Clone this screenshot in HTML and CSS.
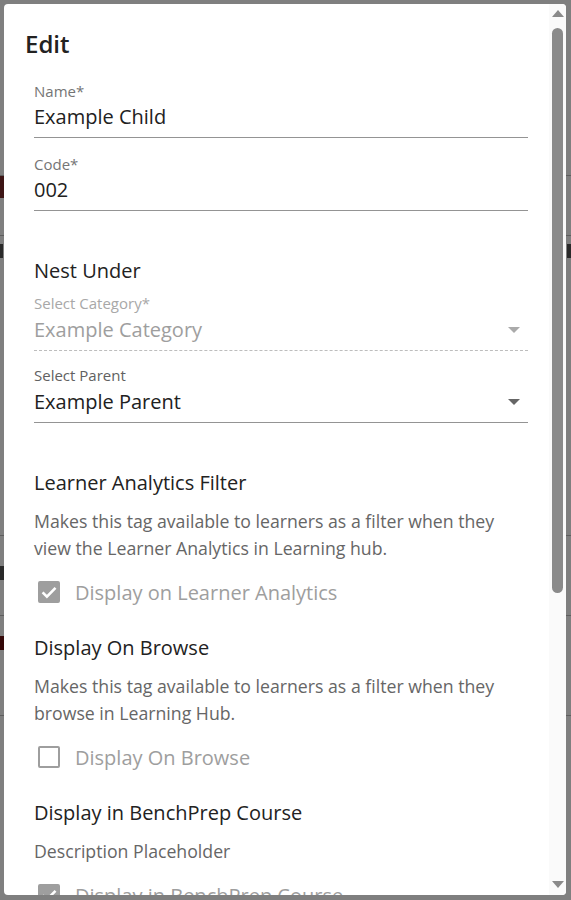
FILE: index.html
```html
<!DOCTYPE html>
<html lang="en">
<head>
<meta charset="utf-8">
<title>Edit</title>
<link rel="stylesheet" href="styles.css">
</head>
<body>
<div class="page">
  <div class="page-row row-a"></div>
  <div class="page-row row-b"><span class="red-tag"></span></div>
  <div class="page-row row-c"><span class="bg-mark"></span><span class="bg-mark right"></span></div>
  <div class="page-row row-d"><span class="bg-mark right"></span></div>
  <div class="page-row row-e"><span class="bg-mark right red"></span></div>
</div>
<div class="backdrop"></div>
<div class="modal">
  <div class="modal-body">
    <h1 class="title">Edit</h1>

    <div class="field">
      <div class="label">Name*</div>
      <div class="value">Example Child</div>
    </div>

    <div class="field field-code">
      <div class="label">Code*</div>
      <div class="value">002</div>
    </div>

    <h2 class="heading heading-nest">Nest Under</h2>

    <div class="field field-select disabled">
      <div class="label">Select Category*</div>
      <div class="value">Example Category<span class="caret"></span></div>
    </div>

    <div class="field field-select field-parent">
      <div class="label">Select Parent</div>
      <div class="value">Example Parent<span class="caret"></span></div>
    </div>

    <h2 class="heading heading-section">Learner Analytics Filter</h2>
    <p class="desc">Makes this tag available to learners as a filter when they view the Learner Analytics in Learning hub.</p>
    <div class="check-row">
      <span class="box checked"><svg viewBox="0 0 20 20" width="20" height="20"><path d="M3.6 10.4l4.3 4.2 8.6-8.8" fill="none" stroke="#fff" stroke-width="2.6"/></svg></span>
      <span class="check-label">Display on Learner Analytics</span>
    </div>

    <h2 class="heading heading-next">Display On Browse</h2>
    <p class="desc">Makes this tag available to learners as a filter when they browse in Learning Hub.</p>
    <div class="check-row">
      <span class="box"></span>
      <span class="check-label">Display On Browse</span>
    </div>

    <h2 class="heading heading-next">Display in BenchPrep Course</h2>
    <p class="desc">Description Placeholder</p>
    <div class="check-row">
      <span class="box checked"><svg viewBox="0 0 20 20" width="20" height="20"><path d="M3.6 10.4l4.3 4.2 8.6-8.8" fill="none" stroke="#fff" stroke-width="2.6"/></svg></span>
      <span class="check-label">Display in BenchPrep Course</span>
    </div>
  </div>
  <div class="scrollbar">
    <span class="arrow up"></span>
    <div class="track"><div class="thumb"></div></div>
    <span class="arrow down"></span>
  </div>
</div>
</body>
</html>
```
FILE: styles.css
```css
* { box-sizing: border-box; }
html, body { margin: 0; padding: 0; }
body {
  width: 571px;
  height: 900px;
  overflow: hidden;
  font-family: "Open Sans", "Noto Sans", sans-serif;
  background: #ffffff;
  position: relative;
}
.page {
  display: flex;
  flex-direction: column;
  padding-top: 140px;
}
.page-row {
  border-bottom: 1px solid #bdbdbd;
  display: flex;
  justify-content: space-between;
  align-items: flex-start;
}
.row-a { height: 36px; }
.row-b { height: 60px; }
.red-tag { display: block; width: 12px; height: 22px; background: #7a2a2a; }
.row-c { height: 300px; padding-top: 8px; }
.row-d { height: 80px; padding-top: 30px; }
.row-e { height: 100px; padding-top: 20px; }
.bg-mark { display: block; width: 3px; height: 14px; background: #555; }
.bg-mark.right { width: 4px; }
.bg-mark.red { background: #6a1010; }
.backdrop {
  position: absolute;
  inset: 0;
  background: rgba(0, 0, 0, 0.5);
}
.modal {
  position: absolute;
  left: 4px;
  top: 4px;
  width: 562px;
  height: 891px;
  background: #fff;
  border-radius: 4px;
  display: flex;
  overflow: hidden;
}
.modal-body {
  flex: 1;
  padding: 25px 21px 0 30px;
  overflow: hidden;
}
.title {
  margin: 0 0 0 -9px;
  font-size: 24px;
  font-weight: 600;
  line-height: 30px;
  color: #222;
}
.field {
  margin-top: 22px;
  border-bottom: 1px solid #949494;
  padding-bottom: 7px;
}
.field-code { margin-top: 16px; }
.label {
  font-size: 15px;
  line-height: 20px;
  color: #757575;
}
.value {
  font-size: 20px;
  line-height: 26px;
  color: #212121;
  margin-top: 3px;
  display: flex;
  align-items: center;
  justify-content: space-between;
}
.field-select .value { margin-top: 4px; }
.caret {
  width: 0;
  height: 0;
  border-left: 6px solid transparent;
  border-right: 6px solid transparent;
  border-top: 6px solid #666;
  margin-right: 8px;
}
.field-select.disabled { margin-top: 9px; border-bottom: 1px dashed #bdbdbd; padding-bottom: 7px; }
.field-select.disabled .label { color: #a8a8a8; }
.field-select.disabled .value { color: #9e9e9e; }
.field-select.disabled .caret { border-top-color: #aaa; }
.field-parent { margin-top: 14px; padding-bottom: 7px; }
.field-parent .label { color: #616161; }
.heading {
  margin: 0;
  font-size: 20px;
  font-weight: 400;
  line-height: 26px;
  color: #222;
}
.heading-nest { margin-top: 47px; }
.heading-section { margin-top: 47px; }
.heading-next { margin-top: 27px; }
.desc {
  margin: 12px 0 0;
  font-size: 17.7px;
  line-height: 27px;
  color: #666;
}
.check-row {
  margin-top: 14px;
  height: 32px;
  display: flex;
  align-items: center;
}
.box {
  width: 22px;
  height: 22px;
  margin-left: 4px;
  border: 2px solid #9e9e9e;
  border-radius: 2px;
  display: flex;
  align-items: center;
  justify-content: center;
}
.box.checked { background: #9e9e9e; }
.box svg { display: block; flex: none; }
.check-label {
  margin-left: 15px;
  font-size: 20px;
  color: #9e9e9e;
}
.scrollbar {
  width: 17px;
  background: #fafafa;
  display: flex;
  flex-direction: column;
  align-items: center;
  padding: 6px 0 7px;
}
.arrow {
  width: 0;
  height: 0;
  border-left: 6px solid transparent;
  border-right: 6px solid transparent;
}
.arrow.up { border-bottom: 7px solid #8a8a8a; }
.arrow.down { border-top: 7px solid #8a8a8a; }
.track {
  flex: 1;
  width: 100%;
  display: flex;
  justify-content: center;
  padding-top: 11px;
}
.thumb {
  width: 11px;
  height: 565px;
  background: #8a8a8a;
  border-radius: 6px;
}
```
